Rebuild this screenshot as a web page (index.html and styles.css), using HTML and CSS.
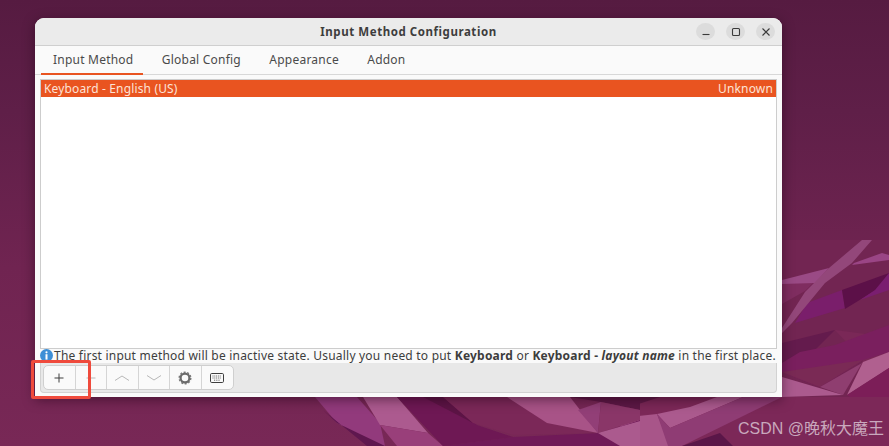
FILE: index.html
```html
<!DOCTYPE html>
<html lang="en">
<head>
<meta charset="utf-8">
<title>Input Method Configuration</title>
<link rel="stylesheet" href="styles.css">
</head>
<body>
<svg class="wallpaper" viewBox="0 0 889 446" width="889" height="446" aria-hidden="true">
  <defs>
    <linearGradient id="bg" x1="0" y1="0" x2="0" y2="1">
      <stop offset="0" stop-color="#561b41"/>
      <stop offset="0.25" stop-color="#5f1f48"/>
      <stop offset="0.6" stop-color="#702451"/>
      <stop offset="1" stop-color="#782856"/>
    </linearGradient>
  </defs>
  <rect width="889" height="446" fill="url(#bg)"/>
  <!-- right edge -->
  <polygon points="782,240 889,240 889,446 782,446" fill="#722552"/>
  <polygon points="835,330 889,337 889,400 847,395 863,360" fill="#7a2857"/>
  <polygon points="782,343 835,330 815,350 782,363" fill="#641b4d"/>
  <polygon points="782,283 814,282 805,291 782,304" fill="#7f2d60"/>
  <polygon points="782,280 829,268 815,283 782,284" fill="#9a4a85"/>
  <polygon points="795,323 807,303 842,290 845,308" fill="#7a1e6b"/>
  <polygon points="842,290 889,273 889,282 845,309" fill="#5c1048"/>
  <polygon points="875,290 889,273 889,290 860,300" fill="#7a1e70"/>
  <polygon points="862,240 872,240 852,263 825,283 792,323 782,333 782,328 805,292 829,268" fill="#93477a"/>
  <polygon points="854,263 882,253 889,255 889,260 852,265" fill="#9a4585"/>
  <!-- lower right -->
  <polygon points="782,363 800,352 835,345 889,325 889,352 863,360 820,387 782,372" fill="#7a1f5e"/>
  <polygon points="782,372 863,360 820,387" fill="#7a2a55"/>
  <polygon points="820,387 862,363 843,395" fill="#8f3e70"/>
  <polygon points="863,362 889,352 889,368 847,395" fill="#b0608f"/>
  <polygon points="847,395 889,368 889,400 850,397" fill="#7c1e58"/>
  <polygon points="782,377 843,395 782,397" fill="#ab5a8e"/>
  <polygon points="620,397 889,397 889,446 620,446" fill="#7c2858"/>
  <polygon points="620,397 660,397 620,410" fill="#5e1a46"/>
  <polygon points="620,418 657,414 670,446 620,446" fill="#a85589"/>
  <polygon points="657,414 690,407 717,397 743,397 670,428" fill="#ab5a8e"/>
  <polygon points="657,414 670,428 743,397 782,397 682,446 668,446" fill="#8f3c74"/>
  <polygon points="682,446 720,433 733,446" fill="#5a1648"/>
  <!-- bottom strip -->
  <polygon points="443,446 513,437 600,433 640,420 640,446" fill="#701a58"/>
  <polygon points="315,397 357,397 380,423 385,446 380,446 337,423" fill="#923a7c"/>
  <polygon points="323,410 337,423 385,446 367,446" fill="#5f174f"/>
  <polygon points="363,397 397,397 428,433 380,425" fill="#ac5a8f"/>
  <polygon points="380,425 428,433 443,446 397,446" fill="#993f7a"/>
  <polygon points="397,397 443,397 477,425 513,437 443,446" fill="#6e1854"/>
  <polygon points="423,397 443,397 473,423" fill="#5c1445"/>
  <polygon points="443,397 507,397 597,433 513,435 473,423" fill="#7b2858"/>
  <polygon points="507,397 570,397 598,433 547,423" fill="#a85387"/>
  <polygon points="570,397 640,397 640,410 601,402" fill="#5c1845"/>
  <polygon points="578,410 601,402 598,433" fill="#923f77"/>
  <polygon points="601,402 640,410 640,420 598,433" fill="#8a3668"/>
  <polygon points="598,433 640,421 640,446 620,446" fill="#ab5a8e"/>
</svg>

<section class="window">
  <header class="titlebar">
    <h1 class="title">Input Method Configuration</h1>
    <div class="controls">
      <button class="ctl" aria-label="Minimize"><svg width="10" height="10" viewBox="0 0 10 10"><path d="M1.5 7.5h7" class="ctl-stroke"/></svg></button>
      <button class="ctl" aria-label="Maximize"><svg width="10" height="10" viewBox="0 0 10 10"><rect x="1.5" y="1.5" width="7" height="7" rx="1" class="ctl-stroke"/></svg></button>
      <button class="ctl" aria-label="Close"><svg width="10" height="10" viewBox="0 0 10 10"><path d="M1.5 1.5l7 7M8.5 1.5l-7 7" class="ctl-stroke"/></svg></button>
    </div>
  </header>

  <nav class="tabs">
    <span class="tab active">Input Method</span>
    <span class="tab">Global Config</span>
    <span class="tab">Appearance</span>
    <span class="tab">Addon</span>
  </nav>

  <div class="body">
    <div class="list">
      <div class="row"><span>Keyboard - English (US)</span><span>Unknown</span></div>
    </div>
    <p class="hint"><svg class="info" width="13" height="13" viewBox="0 0 13 13"><circle cx="6.5" cy="6.5" r="6.5" fill="#3d8fd6"/><circle cx="6.5" cy="3.3" r="1.1" fill="#fff"/><rect x="5.5" y="5.2" width="2" height="5.4" fill="#fff"/></svg>The first input method will be inactive state. Usually you need to put <b>Keyboard</b> or <b>Keyboard - <i>layout name</i></b> in the first place.</p>
    <div class="toolbar">
      <div class="btns">
        <button class="tbtn" aria-label="Add"><svg width="12" height="12" viewBox="0 0 12 12"><path d="M6 1.5v9M1.5 6h9" class="ico"/></svg></button>
        <button class="tbtn off" aria-label="Remove"><svg width="12" height="12" viewBox="0 0 12 12"><path d="M1.5 6h9" class="ico"/></svg></button>
        <button class="tbtn off" aria-label="Move up"><svg width="16" height="8" viewBox="0 0 16 8"><path d="M1 6.5L8 2l7 4.5" class="ico"/></svg></button>
        <button class="tbtn off" aria-label="Move down"><svg width="16" height="8" viewBox="0 0 16 8"><path d="M1 1.5L8 6l7-4.5" class="ico"/></svg></button>
        <button class="tbtn" aria-label="Configure"><svg width="14" height="14" viewBox="0 0 14 14"><circle cx="7" cy="7" r="4.4" class="gear"/><circle cx="7" cy="7" r="5.8" class="teeth"/></svg></button>
        <button class="tbtn" aria-label="Keyboard"><svg width="14" height="10" viewBox="0 0 14 10"><rect x=".5" y=".5" width="13" height="9" rx="1.2" class="ico"/><path d="M2.5 3h9M2.5 5h9M4 7.2h6" class="keys"/></svg></button>
      </div>
    </div>
  </div>
</section>

<div class="highlight"></div>
<div class="watermark">CSDN @晚秋大魔王</div>
</body>
</html>
```
FILE: styles.css
```css
* { box-sizing: border-box; }
html, body { margin: 0; padding: 0; }
body {
  width: 889px;
  height: 446px;
  overflow: hidden;
  position: relative;
  background: #6e2350;
  font-family: "Noto Sans", "Open Sans", sans-serif;
  font-size: 12px;
  letter-spacing: .15px;
  color: #3d3d3d;
}
.wallpaper { position: absolute; left: 0; top: 0; display: block; }

.window {
  position: absolute;
  left: 35px;
  top: 18px;
  width: 747px;
  height: 379px;
  background: #fafafa;
  border-radius: 9px 9px 0 0;
  box-shadow: 0 3px 12px rgba(30, 0, 20, .5);
  display: flex;
  flex-direction: column;
}
.titlebar {
  height: 28px;
  flex: none;
  background: #ebebeb;
  border-bottom: 1px solid #cfcfcf;
  border-radius: 9px 9px 0 0;
  position: relative;
  display: flex;
  align-items: center;
  justify-content: flex-end;
  padding-right: 7px;
}
.title {
  position: absolute;
  left: 0;
  right: 0;
  margin: 0;
  text-align: center;
  font-size: 11.5px;
  font-weight: 700;
  letter-spacing: .56px;
  color: #3d3d3d;
}
.controls { display: flex; gap: 11px; position: relative; }
.ctl {
  width: 19px;
  height: 17px;
  padding: 0;
  border: 0;
  border-radius: 50%;
  background: #dcdcdc;
  display: flex;
  align-items: center;
  justify-content: center;
}
.ctl-stroke { fill: none; stroke: #3a3a3a; stroke-width: 1.1; }

.tabs {
  height: 29px;
  flex: none;
  display: flex;
  padding-left: 6px;
  border-bottom: 1px solid #d8d8d8;
  background: #fafafa;
}
.tab {
  padding: 0 10px 0 12px;
  margin-right: 6.4px;
  line-height: 27px;
  letter-spacing: .22px;
  color: #4a4a4a;
  white-space: nowrap;
}
.tab.active { border-bottom: 2px solid #e95420; height: 29px; }

.body {
  flex: 1;
  display: flex;
  flex-direction: column;
  padding: 4px 5px 4px 5px;
  min-height: 0;
}
.list {
  height: 270px;
  flex: none;
  background: #fff;
  border: 1px solid #cdcdcd;
}
.row {
  height: 17px;
  background: #e95420;
  color: #fde3d6;
  display: flex;
  justify-content: space-between;
  align-items: center;
  padding: 0 3px;
}
.hint {
  margin: 0;
  height: 14px;
  line-height: 14px;
  white-space: nowrap;
  display: block;
  letter-spacing: .21px;
  color: #3d3d3d;
}
.info { vertical-align: -2px; margin-right: 1px; }
.toolbar {
  flex: 1;
  background: #e8e8e8;
  border: 1px solid #d2d2d2;
  border-top: 0;
  border-radius: 0 0 4px 4px;
  padding: 2px;
}
.btns {
  display: inline-flex;
  height: 25px;
  background: #fafafa;
  border: 1px solid #cfcfcf;
  border-radius: 5px;
}
.tbtn {
  width: 31.5px;
  padding: 0;
  background: none;
  border: 0;
  border-right: 1px solid #d5d5d5;
  display: flex;
  align-items: center;
  justify-content: center;
}
.tbtn:last-child { border-right: 0; }
.ico { fill: none; stroke: #3f3f3f; stroke-width: 1; }
.off .ico { stroke: #b8b8b8; }
.keys { fill: none; stroke: #666; stroke-width: 1; stroke-dasharray: 1 .8; }
.gear { fill: none; stroke: #6a6a6a; stroke-width: 2.2; }
.teeth { fill: none; stroke: #777; stroke-width: 1.4; stroke-dasharray: 2 1.6; }

.highlight {
  position: absolute;
  left: 31px;
  top: 360px;
  width: 60px;
  height: 39px;
  border: 3px solid #ef4a3c;
  border-radius: 2px;
}
.watermark {
  position: absolute;
  right: 5px;
  bottom: 7px;
  font-family: "Liberation Sans", "Noto Sans CJK SC", sans-serif;
  font-size: 16px;
  letter-spacing: 0;
  color: #c9a8bd;
  white-space: nowrap;
}
```
